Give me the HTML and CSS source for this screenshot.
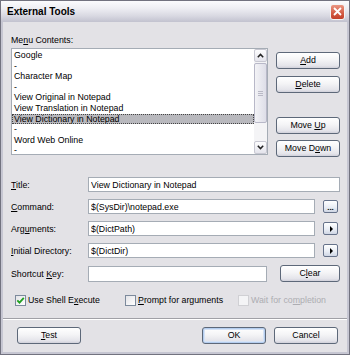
FILE: index.html
```html
<!DOCTYPE html>
<html lang="en">
<head>
    <meta charset="UTF-8">
    <title>External Tools</title>
    <link rel="stylesheet" href="styles.css">
</head>
<body>
    <div class="window">
        <div class="titlebar">
            <span class="title">External Tools</span>
            <span class="close">
                <svg width="9" height="9" viewBox="0 0 9 9"><path d="M1 1 L8 8 M8 1 L1 8" stroke="#fff" stroke-width="1.8" fill="none"/></svg>
            </span>
        </div>

        <div class="client">
            <div class="body">
                <div class="menu-label">Me<u>n</u>u Contents:</div>
                <div class="menu-row">
                    <div class="listbox">
                        <ul class="items">
                            <li>Google</li>
                            <li>-</li>
                            <li>Character Map</li>
                            <li>-</li>
                            <li>View Original in Notepad</li>
                            <li>View Translation in Notepad</li>
                            <li class="selected">View Dictionary in Notepad</li>
                            <li>-</li>
                            <li>Word Web Online</li>
                            <li>-</li>
                        </ul>
                        <div class="scrollbar">
                            <div class="sb-btn">
                                <svg width="7" height="5" viewBox="0 0 7 5"><path d="M0.8 4.2 L3.5 1.4 L6.2 4.2" stroke="#222" stroke-width="1.5" fill="none"/></svg>
                            </div>
                            <div class="sb-track">
                                <div class="sb-thumb">
                                    <svg width="5" height="5" viewBox="0 0 5 5"><path d="M0 0.5 H5 M0 2.5 H5 M0 4.5 H5" stroke="#b9b9c6" stroke-width="1"/></svg>
                                </div>
                            </div>
                            <div class="sb-btn">
                                <svg width="7" height="5" viewBox="0 0 7 5"><path d="M0.8 0.8 L3.5 3.6 L6.2 0.8" stroke="#222" stroke-width="1.5" fill="none"/></svg>
                            </div>
                        </div>
                    </div>
                    <div class="side-buttons">
                        <button class="btn"><u>A</u>dd</button>
                        <button class="btn btn-delete"><u>D</u>elete</button>
                        <button class="btn btn-up">Move <u>U</u>p</button>
                        <button class="btn btn-down">Move D<u>o</u>wn</button>
                    </div>
                </div>

                <div class="fields">
                    <label><u>T</u>itle:</label>
                    <input class="field wide" type="text" value="View Dictionary in Notepad" readonly>

                    <label><u>C</u>ommand:</label>
                    <input class="field" type="text" value="$(SysDir)\notepad.exe" readonly>
                    <button class="mini dots">...</button>

                    <label>Arg<u>u</u>ments:</label>
                    <input class="field" type="text" value="$(DictPath)" readonly>
                    <button class="mini"><span class="tri"></span></button>

                    <label><u>I</u>nitial Directory:</label>
                    <input class="field" type="text" value="$(DictDir)" readonly>
                    <button class="mini"><span class="tri"></span></button>

                    <label>Shortcut <u>K</u>ey:</label>
                    <div class="shortcut">
                        <input class="field tall" type="text" value="" readonly>
                        <button class="btn btn-clear">C<u>l</u>ear</button>
                    </div>
                </div>

                <div class="checks">
                    <div class="check check-1">
                        <span class="box">
                            <svg width="9" height="9" viewBox="0 0 9 9"><path d="M1.3 4.3 L3.5 6.6 L7.8 1.8" stroke="#21a121" stroke-width="1.8" fill="none"/></svg>
                        </span>
                        <span>Use Shell E<u>x</u>ecute</span>
                    </div>
                    <div class="check check-2">
                        <span class="box"></span>
                        <span><u>P</u>rompt for arguments</span>
                    </div>
                    <div class="check disabled">
                        <span class="box"></span>
                        <span>Wait for co<u>m</u>pletion</span>
                    </div>
                </div>
            </div>

            <div class="separator"></div>

            <div class="footer">
                <button class="btn"><u>T</u>est</button>
                <button class="btn btn-ok">OK</button>
                <button class="btn">Cancel</button>
            </div>
        </div>
    </div>
</body>
</html>
```

FILE: styles.css
```css
* {
    box-sizing: border-box;
}
body {
    margin: 0;
    font-family: "Liberation Sans", Arial, sans-serif;
    font-size: 8.8px;
    color: #000;
}
.window {
    width: 350px;
    height: 355px;
    border: 1px solid #72727f;
    background: #c6c6d2;
    display: flex;
    flex-direction: column;
}
.titlebar {
    height: 21px;
    flex: none;
    display: flex;
    align-items: center;
    justify-content: space-between;
    padding: 0 4px 0 6px;
    background: linear-gradient(#fbfbfd, #eeeef3 35%, #d9d9e2 70%, #c2c2cf);
}
.title {
    font-weight: bold;
    font-size: 10px;
}
.close {
    width: 15px;
    height: 16px;
    border: 1px solid #f4f4f4;
    border-radius: 3px;
    background: linear-gradient(#ea9683, #d35a42 60%, #c2402a);
    display: flex;
    align-items: center;
    justify-content: center;
}
.client {
    flex: 1;
    margin: 0 2px 2px;
    background: #e3e2e6;
    display: flex;
    flex-direction: column;
}
.body {
    padding: 13px 7px 0 8px;
}
.menu-label {
    line-height: 11px;
}
.menu-row {
    display: flex;
    gap: 8px;
    margin-top: 2px;
}
.listbox {
    flex: 1;
    height: 107px;
    border: 1px solid #a5acb5;
    background: #fff;
    display: flex;
}
.items {
    flex: 1;
    list-style: none;
    margin: 0;
    padding: 1px 0 0;
    overflow: hidden;
}
.items li {
    height: 10.6px;
    line-height: 10.6px;
    padding-left: 2px;
    white-space: nowrap;
}
.items li.selected {
    background: #b8b8bd;
    outline: 1px dotted #444;
    outline-offset: -1px;
}
.scrollbar {
    width: 13px;
    display: flex;
    flex-direction: column;
    background: #f4f4f6;
}
.sb-btn {
    height: 13px;
    flex: none;
    border: 1px solid #c8c8d2;
    border-radius: 2px;
    background: linear-gradient(#fdfdfe, #e4e4ec);
    display: flex;
    align-items: center;
    justify-content: center;
}
.sb-track {
    flex: 1;
    padding-top: 1px;
}
.sb-thumb {
    height: 60px;
    border: 1px solid #b8b8c8;
    border-radius: 2px;
    background: linear-gradient(90deg, #f3f3f6, #dedee8);
    display: flex;
    align-items: center;
    justify-content: center;
}
.side-buttons {
    width: 64px;
    display: flex;
    flex-direction: column;
    padding-top: 4px;
}
.btn {
    font: inherit;
    color: #000;
    height: 17px;
    padding: 0;
    border: 1px solid #5d6879;
    border-radius: 3px;
    background: linear-gradient(#ffffff, #f4f4f6 45%, #e4e4ea 85%, #d0d0da);
    text-align: center;
    line-height: 15px;
    width: 64px;
}
.btn-delete {
    margin-top: 7px;
}
.btn-up {
    margin-top: 24px;
}
.btn-down {
    margin-top: 6px;
}
.fields {
    display: grid;
    grid-template-columns: 69px 1fr 17px;
    column-gap: 8px;
    row-gap: 7px;
    align-items: center;
    margin-top: 20px;
}
.field {
    font: inherit;
    color: #000;
    height: 15px;
    width: 100%;
    min-width: 0;
    margin: 0;
    padding: 0 2px;
    border: 1px solid #a5acb5;
    background: #fff;
    outline: none;
}
.field.wide {
    grid-column: 2 / 4;
}
.field.tall {
    height: 16px;
}
.mini {
    font: inherit;
    width: 15px;
    height: 13px;
    padding: 0;
    border: 1px solid #66728a;
    border-radius: 2px;
    background: linear-gradient(#ffffff, #e8ecf4 60%, #cfd6e4);
    display: flex;
    align-items: center;
    justify-content: center;
}
.dots {
    align-items: flex-end;
    line-height: 9px;
    font-weight: bold;
    font-size: 8px;
}
.tri {
    width: 0;
    height: 0;
    border-top: 3px solid transparent;
    border-bottom: 3px solid transparent;
    border-left: 3px solid #000;
    margin-left: 1px;
}
.shortcut {
    grid-column: 2 / 4;
    display: flex;
    gap: 13px;
    align-items: center;
}
.btn-clear {
    width: 60px;
    flex: none;
}
.checks {
    display: flex;
    margin-top: 13px;
    padding-left: 4px;
}
.check {
    display: flex;
    align-items: center;
    gap: 2px;
    line-height: 11px;
}
.check-1 {
    width: 110px;
}
.check-2 {
    width: 113px;
}
.box {
    width: 11px;
    height: 11px;
    border: 1px solid #7c8a9c;
    background: linear-gradient(135deg, #e4e4e8, #ffffff);
    display: flex;
    align-items: center;
    justify-content: center;
}
.check.disabled {
    color: #adadb2;
}
.check.disabled .box {
    border-color: #d0d0d4;
    background: #f4f4f6;
}
.separator {
    margin-top: 12px;
    border-top: 1px solid #a0a0a6;
    border-bottom: 1px solid #fff;
}
.footer {
    display: flex;
    gap: 8px;
    padding: 7px 9px 0 14px;
}
.footer .btn-ok {
    margin-left: auto;
    box-shadow: inset 0 0 0 1px #b4cdef, inset 0 0 0 2px #d6e3f6;
}
```
